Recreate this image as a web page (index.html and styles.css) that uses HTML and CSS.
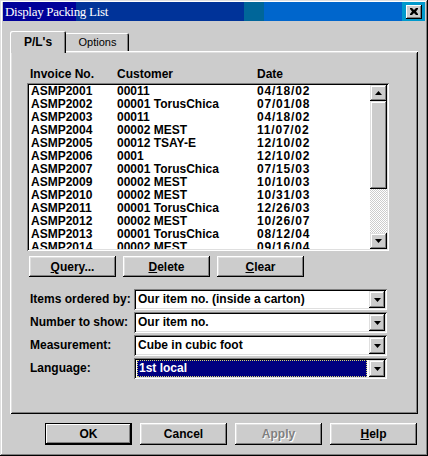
FILE: index.html
```html
<!DOCTYPE html>
<html>
<head>
<meta charset="utf-8">
<link rel="stylesheet" href="styles.css">
</head>
<body>
<div class="window">
  <div class="titlebar">
    <span class="title">Display Packing List</span>
    <div class="close"><svg width="8" height="7" viewBox="0 0 8 7"><path d="M0 0h2l2 2 2-2h2v1L6 3.5 8 6v1H6L4 5 2 7H0V6l2-2.5L0 1z" fill="#000"/></svg></div>
  </div>
  <div class="body">
    <div class="tabs">
      <div class="tab active">P/L's</div>
      <div class="tab">Options</div>
    </div>
    <div class="panel">
      <div class="cols"><span>Invoice No.</span><span>Customer</span><span>Date</span></div>
      <div class="listbox">
        <div class="rows">
          <div class="row"><span>ASMP2001</span><span>00011</span><span>04/18/02</span></div>
          <div class="row"><span>ASMP2002</span><span>00001 TorusChica</span><span>07/01/08</span></div>
          <div class="row"><span>ASMP2003</span><span>00011</span><span>04/18/02</span></div>
          <div class="row"><span>ASMP2004</span><span>00002 MEST</span><span>11/07/02</span></div>
          <div class="row"><span>ASMP2005</span><span>00012 TSAY-E</span><span>12/10/02</span></div>
          <div class="row"><span>ASMP2006</span><span>0001</span><span>12/10/02</span></div>
          <div class="row"><span>ASMP2007</span><span>00001 TorusChica</span><span>07/15/03</span></div>
          <div class="row"><span>ASMP2009</span><span>00002 MEST</span><span>10/10/03</span></div>
          <div class="row"><span>ASMP2010</span><span>00002 MEST</span><span>10/31/03</span></div>
          <div class="row"><span>ASMP2011</span><span>00001 TorusChica</span><span>12/26/03</span></div>
          <div class="row"><span>ASMP2012</span><span>00002 MEST</span><span>10/26/07</span></div>
          <div class="row"><span>ASMP2013</span><span>00001 TorusChica</span><span>08/12/04</span></div>
          <div class="row"><span>ASMP2014</span><span>00002 MEST</span><span>09/16/04</span></div>
        </div>
        <div class="vscroll">
          <div class="sbtn"><svg width="7" height="4" viewBox="0 0 7 4"><path d="M3.5 0L7 4H0z" fill="#000"/></svg></div>
          <div class="thumb"></div>
          <div class="track"></div>
          <div class="sbtn"><svg width="7" height="4" viewBox="0 0 7 4"><path d="M0 0h7L3.5 4z" fill="#000"/></svg></div>
        </div>
      </div>
      <div class="actions">
        <div class="btn"><u>Q</u>uery...</div>
        <div class="btn"><u>D</u>elete</div>
        <div class="btn"><u>C</u>lear</div>
      </div>
      <div class="fields">
        <div class="label">Items ordered by:</div>
        <div class="combo"><div class="field">Our item no. (inside a carton)</div><div class="dd"><svg width="7" height="4" viewBox="0 0 7 4"><path d="M0 0h7L3.5 4z" fill="#000"/></svg></div></div>
        <div class="label">Number to show:</div>
        <div class="combo"><div class="field">Our item no.</div><div class="dd"><svg width="7" height="4" viewBox="0 0 7 4"><path d="M0 0h7L3.5 4z" fill="#000"/></svg></div></div>
        <div class="label">Measurement:</div>
        <div class="combo"><div class="field">Cube in cubic foot</div><div class="dd"><svg width="7" height="4" viewBox="0 0 7 4"><path d="M0 0h7L3.5 4z" fill="#000"/></svg></div></div>
        <div class="label">Language:</div>
        <div class="combo"><div class="field selected">1st local</div><div class="dd"><svg width="7" height="4" viewBox="0 0 7 4"><path d="M0 0h7L3.5 4z" fill="#000"/></svg></div></div>
      </div>
    </div>
    <div class="footer">
      <div class="btn default">OK</div>
      <div class="btn">Cancel</div>
      <div class="btn disabled">Apply</div>
      <div class="btn"><u>H</u>elp</div>
    </div>
  </div>
</div>
</body>
</html>
```
FILE: styles.css
```css
body {
  margin: 0;
  background: #cccccc;
  font-family: "Liberation Sans", Arial, sans-serif;
  font-size: 12px;
  font-weight: bold;
  color: #000;
}
.window {
  width: 428px;
  height: 456px;
  box-sizing: border-box;
  padding: 2px 3px;
  background: #cccccc;
  box-shadow: inset -1px -1px #000, inset 1px 1px #dfdfdf, inset -2px -2px #808080, inset 2px 2px #fff;
  display: flex;
  flex-direction: column;
}
.titlebar {
  height: 19px;
  flex: none;
  display: flex;
  align-items: center;
  justify-content: space-between;
  background: linear-gradient(to right, #000099 0 73px, #003399 73px 241px, #006699 241px 261px, #0066cc 261px 399px, #0099cc 399px);
}
.title {
  font-family: "Liberation Serif", "Times New Roman", serif;
  font-weight: normal;
  font-size: 13px;
  letter-spacing: -0.3px;
  color: #fff;
  padding-left: 2px;
}
.close {
  width: 16px;
  height: 14px;
  margin-right: 3px;
  background: #cccccc;
  box-shadow: inset -1px -1px #000, inset 1px 1px #fff, inset -2px -2px #808080;
  display: flex;
  align-items: center;
  justify-content: center;
}
.close svg { margin-left: -1px; margin-top: -1px; }
.body {
  padding: 10px 0 0 7px;
}
.tabs {
  display: flex;
  align-items: flex-end;
  height: 20px;
  position: relative;
  z-index: 2;
}
.tab {
  height: 18px;
  box-sizing: border-box;
  padding-top: 3px;
  text-align: center;
  font-weight: normal;
  font-size: 11px;
  background: #cccccc;
  border-radius: 2px 2px 0 0;
  box-shadow: inset 1px 1px #fff, inset -1px 0 #000, inset -2px 0 #808080;
}
.tab.active {
  width: 56px;
  height: 22px;
  margin-bottom: -2px;
  padding-top: 4px;
  font-weight: bold;
  font-size: 12px;
  position: relative;
  z-index: 3;
}
.tab:not(.active) {
  width: 65px;
  margin-left: -2px;
  padding-left: 2px;
}
.panel {
  width: 408px;
  height: 363px;
  box-sizing: border-box;
  padding: 16px 0 0 17px;
  box-shadow: inset 1px 1px #fff, inset -1px -1px #000, inset 2px 2px #dfdfdf, inset -2px -2px #808080;
}
.cols {
  display: grid;
  grid-template-columns: 87px 140px 1fr;
  padding-left: 3px;
  height: 16px;
  line-height: 14px;
}
.listbox {
  width: 362px;
  height: 168px;
  box-sizing: border-box;
  padding: 2px;
  background: #fff;
  box-shadow: inset 1px 1px #808080, inset -1px -1px #fff, inset 2px 2px #000, inset -2px -2px #dfdfdf;
  display: flex;
}
.rows {
  flex: 1;
  overflow: hidden;
  padding-left: 2px;
}
.row {
  display: grid;
  grid-template-columns: 86px 140px 1fr;
  height: 13px;
  line-height: 13px;
  white-space: nowrap;
}
.row span:last-child {
  letter-spacing: 0.8px;
}
.vscroll {
  width: 17px;
  display: flex;
  flex-direction: column;
}
.sbtn, .thumb, .dd {
  background: #cccccc;
  box-shadow: inset -1px -1px #000, inset 1px 1px #dfdfdf, inset -2px -2px #808080, inset 2px 2px #fff;
}
.sbtn {
  height: 16px;
  display: flex;
  align-items: center;
  justify-content: center;
}
.thumb { height: 88px; }
.track {
  flex: 1;
  background: repeating-conic-gradient(#cccccc 0 25%, #ffffff 0 50%) 0 0 / 2px 2px;
}
.actions {
  display: flex;
  gap: 7px;
  padding-left: 2px;
  margin-top: 5px;
}
.btn {
  width: 87px;
  height: 21px;
  box-sizing: border-box;
  display: flex;
  align-items: center;
  justify-content: center;
  background: #cccccc;
  box-shadow: inset -1px -1px #000, inset 1px 1px #fff, inset -2px -2px #808080, inset 2px 2px #dfdfdf;
}
.fields {
  display: grid;
  grid-template-columns: 104px 253px;
  row-gap: 2px;
  padding-left: 3px;
  margin-top: 12px;
}
.label {
  height: 21px;
  line-height: 21px;
}
.combo {
  height: 21px;
  box-sizing: border-box;
  padding: 2px;
  background: #fff;
  box-shadow: inset 1px 1px #808080, inset -1px -1px #fff, inset 2px 2px #000, inset -2px -2px #dfdfdf;
  display: flex;
}
.field {
  flex: 1;
  padding-left: 2px;
  line-height: 17px;
  white-space: nowrap;
}
.field.selected {
  margin: 0 2px 0 1px;
  padding-left: 1px;
  line-height: 15px;
  background: #000080;
  color: #fff;
  border: 1px dotted #d8d870;
}
.dd {
  width: 16px;
  height: 17px;
  display: flex;
  align-items: center;
  justify-content: center;
}
.footer {
  width: 407px;
  display: flex;
  justify-content: flex-end;
  gap: 8px;
  margin-top: 9px;
}
.footer .btn { height: 22px; }
.btn.default {
  box-shadow: inset 0 0 0 1px #000, inset -2px -2px #000, inset 2px 2px #fff, inset -3px -3px #808080;
}
.btn.disabled {
  color: #808080;
  text-shadow: 1px 1px #fff;
}
```
